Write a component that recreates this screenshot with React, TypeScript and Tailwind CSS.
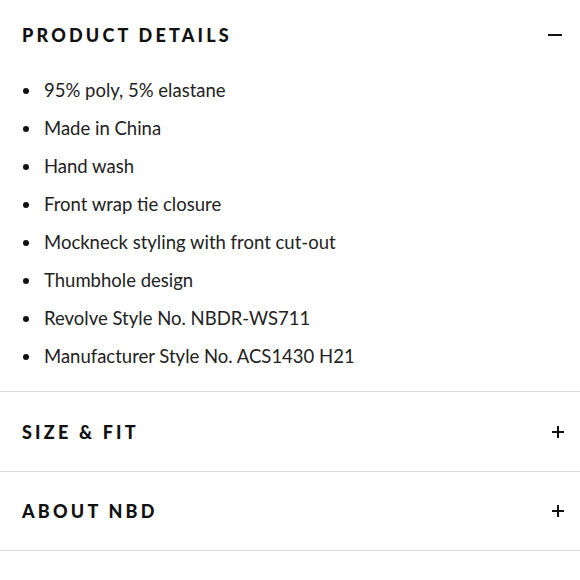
import React from "react";

const items = [
  "95% poly, 5% elastane",
  "Made in China",
  "Hand wash",
  "Front wrap tie closure",
  "Mockneck styling with front cut-out",
  "Thumbhole design",
  "Revolve Style No. NBDR-WS711",
  "Manufacturer Style No. ACS1430 H21",
];

const headFont = { fontFamily: '"Lato", "Liberation Sans", sans-serif' };

function Plus() {
  return (
    <svg width="14" height="14" viewBox="0 0 14 14" className="block">
      <path d="M7 1v12M1 7h12" stroke="#111" strokeWidth="2" />
    </svg>
  );
}

export default function App() {
  return (
    <div className="w-[580px] h-[580px] bg-white text-[#111] overflow-hidden" style={{ fontFamily: '"Lato", "Open Sans", sans-serif' }}>
      <div className="flex items-center justify-between h-[70px] pl-[22px] pr-[16px]">
        <h2 className="text-[18px] font-black tracking-[3.2px] leading-none" style={headFont}>PRODUCT DETAILS</h2>
        <div className="w-[14px] h-[2px] bg-[#111] mr-[2px]" />
      </div>
      <ul className="pt-[2px] pb-[15px]">
        {items.map((t) => (
          <li key={t} className="flex items-center h-[38px] pl-[23px] text-[18.5px] text-[#222]">
            <span className="w-[6px] h-[6px] rounded-full bg-[#111] mr-[15px]" />
            <span>{t}</span>
          </li>
        ))}
      </ul>
      <div className="border-t-[1.5px] border-[#dcdcdc]" />
      <div className="flex items-center justify-between h-[79px] pl-[22px] pr-[15px]">
        <h2 className="text-[18px] font-black tracking-[3.2px] leading-none" style={headFont}>SIZE &amp; FIT</h2>
        <Plus />
      </div>
      <div className="border-t-[1.5px] border-[#dcdcdc]" />
      <div className="flex items-center justify-between h-[78px] pl-[22px] pr-[15px]">
        <h2 className="text-[18px] font-black tracking-[3.2px] leading-none" style={headFont}>ABOUT NBD</h2>
        <Plus />
      </div>
      <div className="border-t-[1.5px] border-[#dcdcdc]" />
    </div>
  );
}
